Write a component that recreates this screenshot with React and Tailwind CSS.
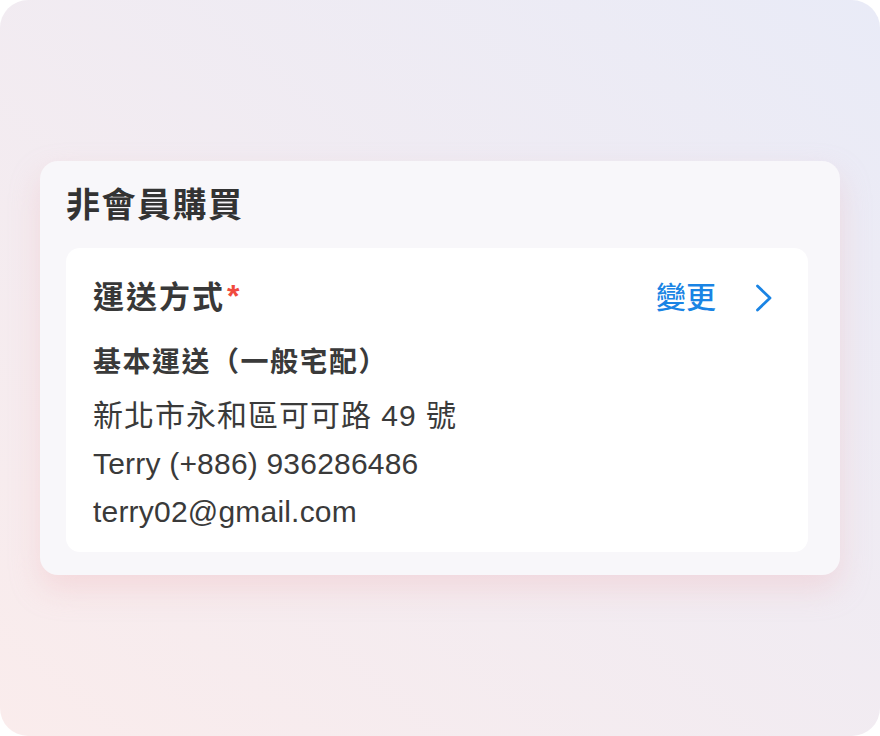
import React from "react";

const ChevronRight = () => (
  <svg width="18" height="28" viewBox="0 0 18 28" fill="none" className="shrink-0">
    <polyline points="2.5,2 15,14 2.5,26" stroke="#1a84e4" strokeWidth="2.8" strokeLinecap="round" strokeLinejoin="round" />
  </svg>
);

const App = () => {
  const font = { fontFamily: '"Liberation Sans", "Noto Sans CJK TC", sans-serif' };

  return (
    <div className="w-[880px] h-[736px] bg-white" style={font}>
      <div className="w-full h-full rounded-[28px] overflow-hidden bg-linear-to-tr from-[#faecec] to-[#e9ebf7] flex items-center justify-center px-10">
        {/* Guest checkout card */}
        <div className="w-[800px] rounded-[18px] bg-[#f8f7fa] pt-[22px] pl-[26px] pr-[32px] pb-[23px] shadow-[0_14px_30px_rgba(238,180,186,0.35)]">
          <h2 className="text-[34px] leading-[44px] font-bold text-[#333333] tracking-[1.5px]">非會員購買</h2>

          <div className="mt-[21px] bg-white rounded-[14px] pt-[28px] pl-[27px] pr-[35px] pb-[16px]">
            {/* Shipping header */}
            <div className="flex items-center justify-between h-[44px]">
              <div className="flex items-start text-[31px] leading-[44px] font-bold text-[#383838] tracking-[2px]">
                <span>運送方式</span>
                <span className="text-[#f04a3e] text-[32px] leading-[40px] ml-[2px]">*</span>
              </div>
              <button className="flex items-center gap-[39px] text-[#1a84e4] text-[30px] leading-[44px] font-medium">
                <span>變更</span>
                <ChevronRight />
              </button>
            </div>

            <div className="mt-[23px] text-[28px] leading-[40px] font-bold text-[#3a3a3a] tracking-[1.5px]">
              基本運送（一般宅配）
            </div>

            <div className="mt-[9px] text-[30px] leading-[48px] text-[#3a3a3a]">
              <p className="tracking-[1px]">新北市永和區可可路 49 號</p>
              <p className="tracking-[0.2px]">Terry (+886) 936286486</p>
              <p className="tracking-[0.2px]">terry02@gmail.com</p>
            </div>
          </div>
        </div>
      </div>
    </div>
  );
};

export default App;
